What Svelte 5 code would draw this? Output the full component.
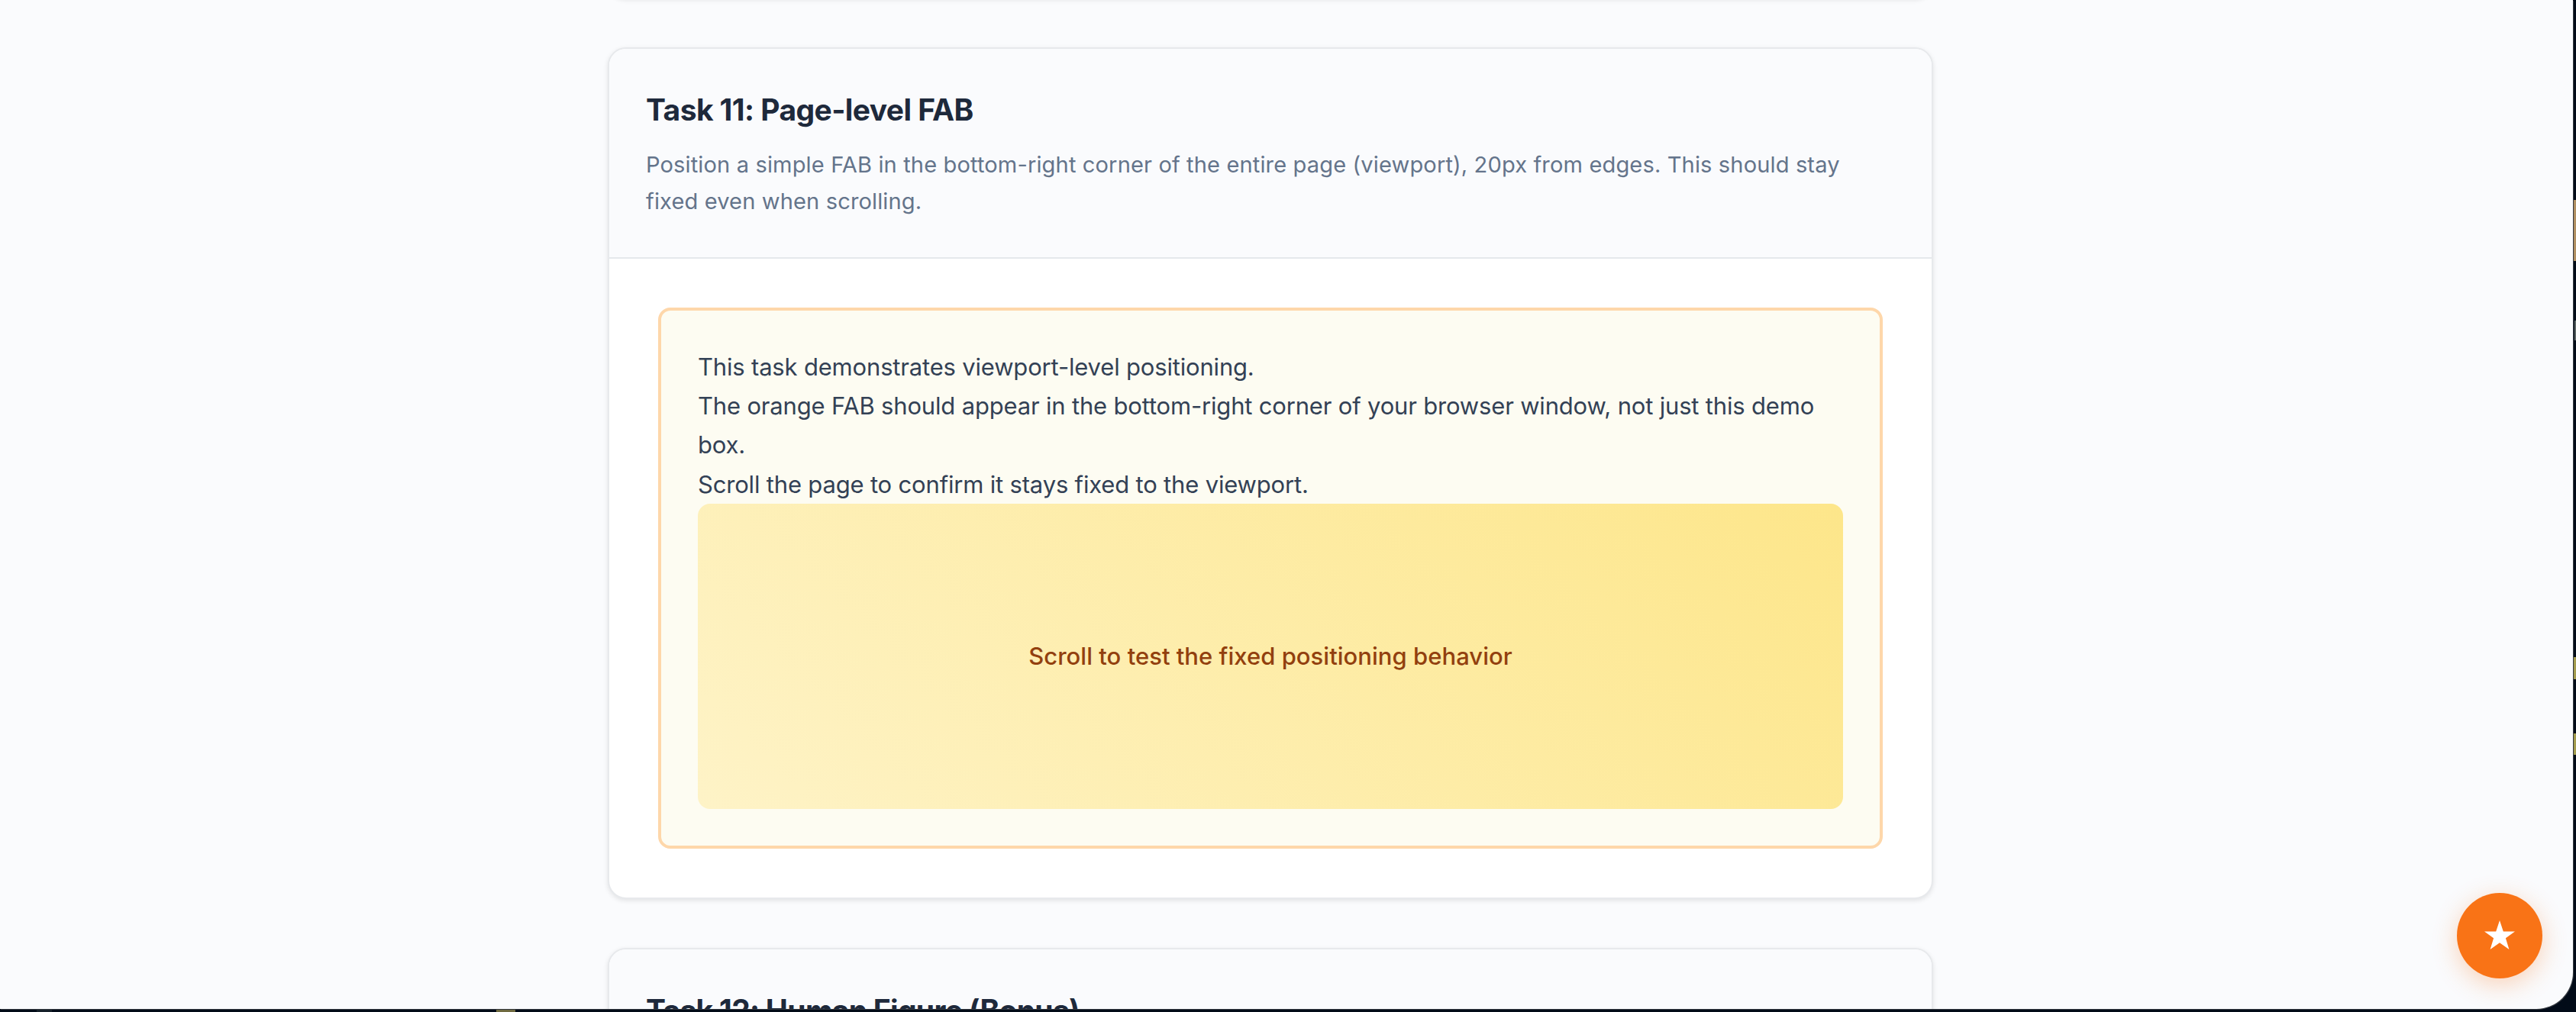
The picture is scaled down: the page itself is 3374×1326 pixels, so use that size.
<script>
  const lines = [
    'This task demonstrates viewport-level positioning.',
    'The orange FAB should appear in the bottom-right corner of your browser window, not just this demo box.',
    'Scroll the page to confirm it stays fixed to the viewport.'
  ];
</script>

<div class="desktop">
  <main class="window">
    <div class="column">
      <section class="card previous"></section>

      <section class="card">
        <header>
          <h2>Task 11: Page-level FAB</h2>
          <p>
            Position a simple FAB in the bottom-right corner of the entire page (viewport), 20px from
            edges. This should stay fixed even when scrolling.
          </p>
        </header>
        <div class="body">
          <div class="demo">
            {#each lines as line}
              <p>{line}</p>
            {/each}
            <div class="scroll-area">Scroll to test the fixed positioning behavior</div>
          </div>
        </div>
      </section>

      <section class="card">
        <header>
          <h2 class="bonus">Task 12: Human Figure (Bonus)</h2>
        </header>
      </section>
    </div>

    <button class="fab" aria-label="Favorite">
      <svg width="40" height="38" viewBox="0 0 40 38">
        <path
          fill="#fff"
          d="M20 0L24.8 14.4H40L27.9 23.2L32.4 38L20 29.3L7.6 38L12.1 23.2L0 14.4H15.2Z"
        />
      </svg>
    </button>
  </main>
</div>

<style>
  :global(body) {
    margin: 0;
    overflow: hidden;
  }

  .desktop {
    box-sizing: border-box;
    width: 3374px;
    height: 1326px;
    padding: 0 4px 4px 0;
    overflow: hidden;
    font-family: Inter, 'Liberation Sans', sans-serif;
    background:
      linear-gradient(#b08f62, #b08f62) 3371px 262px / 3px 80px no-repeat,
      linear-gradient(#5b6464, #5b6464) 3372px 420px / 2px 26px no-repeat,
      linear-gradient(#a39c4e, #a39c4e) 3371px 861px / 3px 29px no-repeat,
      linear-gradient(#a39c4e, #a39c4e) 3371px 961px / 3px 28px no-repeat,
      linear-gradient(#6f6a40, #6f6a40) 650px 1323px / 25px 3px no-repeat,
      linear-gradient(#16202a, #16202a) 48px 1323px / 20px 3px no-repeat,
      #020b18;
  }

  .window {
    position: relative;
    height: 1322px;
    overflow: hidden;
    background: #fafbfd;
    border-bottom-right-radius: 48px;
    box-shadow: 1px 1px 0 #33383f;
  }

  .column {
    display: flex;
    flex-direction: column;
    gap: 64px;
    width: 1736px;
    margin-left: 796px;
  }

  .card {
    box-sizing: border-box;
    flex: none;
    overflow: hidden;
    background: #fff;
    border: 2px solid #e7e9ec;
    border-radius: 24px;
    box-shadow: 0 2px 6px rgba(0, 0, 0, 0.1);
  }

  .previous {
    height: 50px;
    margin-top: -52px;
  }

  header {
    padding: 48px;
    background: #fafbfd;
    border-bottom: 2px solid #e5e8ec;
  }

  h2 {
    margin: 0;
    font-size: 39px;
    font-weight: 700;
    line-height: 64px;
    letter-spacing: -0.58px;
    color: #1e293b;
  }

  .bonus {
    letter-spacing: -0.7px;
  }

  header p {
    margin: 16px 0 1px;
    font-size: 29.1px;
    line-height: 48px;
    letter-spacing: 0.115px;
    color: #64748b;
  }

  .body {
    padding: 64px;
  }

  .demo {
    padding: 48px;
    background: #fdfcf2;
    border: 4px solid #fed7aa;
    border-radius: 16px;
  }

  .demo p {
    margin: 0;
    font-size: 31px;
    line-height: 51.2px;
    letter-spacing: -0.18px;
    color: #334155;
  }

  .scroll-area {
    display: flex;
    align-items: center;
    justify-content: center;
    height: 400px;
    border-radius: 16px;
    background: linear-gradient(45deg, #fef3c7, #fde68a);
    font-size: 31px;
    font-weight: 500;
    letter-spacing: 0.03px;
    color: #92400e;
  }

  .fab {
    position: absolute;
    right: 40px;
    bottom: 40px;
    display: flex;
    align-items: center;
    justify-content: center;
    width: 112px;
    height: 112px;
    padding: 0 0 2px;
    border: 0;
    border-radius: 50%;
    background: #f97316;
    box-shadow: 0 8px 32px rgba(249, 115, 22, 0.3);
  }
</style>
